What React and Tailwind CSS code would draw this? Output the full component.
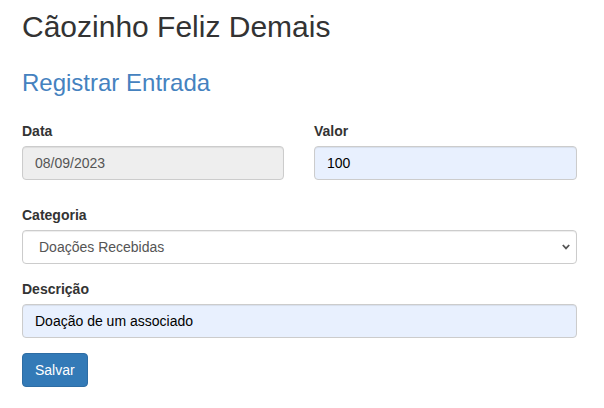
import { useState } from 'react';

const font = { fontFamily: '"Liberation Sans", Arial, Helvetica, sans-serif' };

function Label({ children, className = '' }) {
  return (
    <label className={`block text-[14px] leading-[20px] font-bold text-[#333] mb-[5px] ${className}`}>
      {children}
    </label>
  );
}

const inputBase =
  'block w-full h-[34px] px-[12px] text-[14px] border border-[#ccc] rounded-[4px] outline-none shadow-[inset_0_1px_1px_rgba(0,0,0,0.075)]';

export default function App() {
  const [valor, setValor] = useState('100');
  const [categoria, setCategoria] = useState('doacoes');
  const [descricao, setDescricao] = useState('Doação de um associado');

  return (
    <div className="bg-white min-h-screen pl-[22px] pr-[27px] text-[#333]" style={font}>
      <h1 className="pt-[10px] text-[30px] leading-[33px] font-normal text-[#333]">Cãozinho Feliz Demais</h1>
      <h2 className="mt-[27px] text-[24px] leading-[26px] font-normal text-[#4582bf]">Registrar Entrada</h2>

      <form className="mt-[25px]" onSubmit={e => e.preventDefault()}>
        <div className="grid grid-cols-[262px_1fr] gap-x-[30px]">
          <div>
            <Label>Data</Label>
            <input
              className={`${inputBase} bg-[#eee] text-[#555]`}
              value="08/09/2023"
              disabled
              readOnly
            />
          </div>
          <div>
            <Label>Valor</Label>
            <input
              className={`${inputBase} bg-[#e8f0fe] text-black`}
              value={valor}
              onChange={e => setValor(e.target.value)}
            />
          </div>
        </div>

        <div className="mt-[25px]">
          <Label>Categoria</Label>
          <div className="relative">
            <select
              className={`${inputBase} appearance-none bg-white text-[#555] pl-[16px]`}
              value={categoria}
              onChange={e => setCategoria(e.target.value)}
            >
              <option value="doacoes">Doações Recebidas</option>
              <option value="vendas">Vendas</option>
            </select>
            <svg
              className="absolute right-[7px] top-[14px] pointer-events-none"
              width="8"
              height="6"
              viewBox="0 0 8 6"
              fill="none"
            >
              <path d="M0.8 1 L4 4.4 L7.2 1" stroke="#555" strokeWidth="1.8" />
            </svg>
          </div>
        </div>

        <div className="mt-[15px]">
          <Label>Descrição</Label>
          <input
            className={`${inputBase} bg-[#e8f0fe] text-black`}
            value={descricao}
            onChange={e => setDescricao(e.target.value)}
          />
        </div>

        <button
          type="submit"
          className="mt-[15px] h-[34px] px-[12px] text-[14px] text-white bg-[#337ab7] border border-[#2e6da4] rounded-[4px]"
        >
          Salvar
        </button>
      </form>
    </div>
  );
}
